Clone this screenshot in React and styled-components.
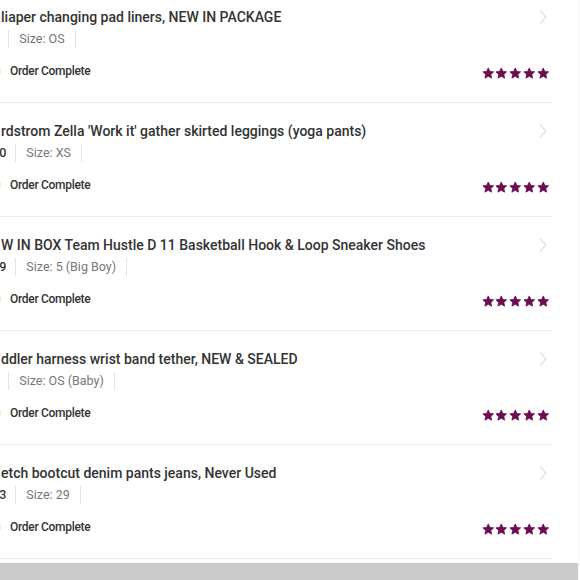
import React from "react";
import styled, { createGlobalStyle } from "styled-components";

const GlobalStyle = createGlobalStyle`
  html, body {
    margin: 0;
    padding: 0;
    background: #fff;
    overflow: hidden;
  }
  body {
    font-family: Roboto, "Liberation Sans", Arial, sans-serif;
  }
`;

const orders = [
  { title: "liaper changing pad liners, NEW IN PACKAGE", price: "$5", size: "OS" },
  { title: "rdstrom Zella 'Work it' gather skirted leggings (yoga pants)", price: "$20", size: "XS" },
  { title: "W IN BOX Team Hustle D 11 Basketball Hook & Loop Sneaker Shoes", price: "$19", size: "5 (Big Boy)" },
  { title: "ddler harness wrist band tether, NEW & SEALED", price: "$8", size: "OS (Baby)" },
  { title: "etch bootcut denim pants jeans, Never Used", price: "$13", size: "29" },
];

const Star = () => (
  <svg width="12.5" height="12.5" viewBox="0 0 24 24">
    <path
      d="M12 1.8l3.1 6.6 7.2.9-5.3 5 1.4 7.1L12 17.9l-6.4 3.5 1.4-7.1-5.3-5 7.2-.9z"
      fill="#6b0d50"
      stroke="#6b0d50"
      strokeWidth="1.5"
      strokeLinejoin="round"
    />
  </svg>
);

const Chevron = () => (
  <svg width="10" height="16" viewBox="0 0 10 16">
    <path d="M2 1.5l6 6.5-6 6.5" fill="none" stroke="#e2e2e2" strokeWidth="1.4" />
  </svg>
);

const OrderRow = ({ order }) => (
  <Item>
    <TitleRow>
      <Title>{order.title}</Title>
      <Chevron />
    </TitleRow>
    <Meta>
      <Cell>{order.price}</Cell>
      <Cell>Size: {order.size}</Cell>
    </Meta>
    <StatusRow>
      <Status>
        <Dot />
        Order Complete
      </Status>
      <Stars>
        {[0, 1, 2, 3, 4].map((i) => (
          <Star key={i} />
        ))}
      </Stars>
    </StatusRow>
  </Item>
);

const App = () => {
  return (
    <Page>
      <GlobalStyle />
      <List>
        {orders.map((o, i) => (
          <OrderRow key={i} order={o} />
        ))}
      </List>
      <Footer />
    </Page>
  );
};

const Page = styled.div`
  width: 578px;
  height: 580px;
  border-right: 1px solid #f5f5f5;
  display: flex;
  flex-direction: column;
  overflow: hidden;
`;

const List = styled.div`
  margin: -11px 0 0 -15px;
  width: 568px;
  flex: 1;
`;

const Item = styled.div`
  box-sizing: border-box;
  height: 114px;
  padding: 20px 4px 0 0;
  border-bottom: 1px solid #ececec;
  display: flex;
  flex-direction: column;
`;

const TitleRow = styled.div`
  display: flex;
  justify-content: space-between;
  align-items: center;
  padding-left: 16px;
  height: 16px;
  svg {
    margin-right: 1px;
  }
`;

const Title = styled.div`
  font-size: 14px;
  font-weight: 500;
  color: #333;
  line-height: 16px;
  white-space: nowrap;
`;

const Meta = styled.div`
  display: flex;
  align-items: center;
  margin-top: 5px;
  height: 18px;
`;

const Cell = styled.div`
  font-size: 12.5px;
  color: #777;
  line-height: 18px;
  padding: 0 10px;
  border-right: 1px solid #e4e4e4;
  &:first-child {
    padding-left: 0;
    padding-right: 9px;
    color: #333;
    font-weight: 500;
  }
`;

const StatusRow = styled.div`
  display: flex;
  justify-content: space-between;
  align-items: flex-end;
  margin-top: 15px;
  height: 16px;
`;

const Status = styled.div`
  display: flex;
  align-items: center;
  gap: 9px;
  padding-left: 8px;
  font-size: 12px;
  letter-spacing: -0.3px;
  font-weight: 500;
  color: #333;
  line-height: 16px;
`;

const Dot = styled.span`
  width: 8px;
  height: 8px;
  border-radius: 50%;
  background: #d6eedc;
`;

const Stars = styled.div`
  display: flex;
  gap: 1.2px;
  height: 12.5px;
`;

const Footer = styled.div`
  height: 17px;
  background: #cbcbcb;
  flex-shrink: 0;
`;

export default App;
